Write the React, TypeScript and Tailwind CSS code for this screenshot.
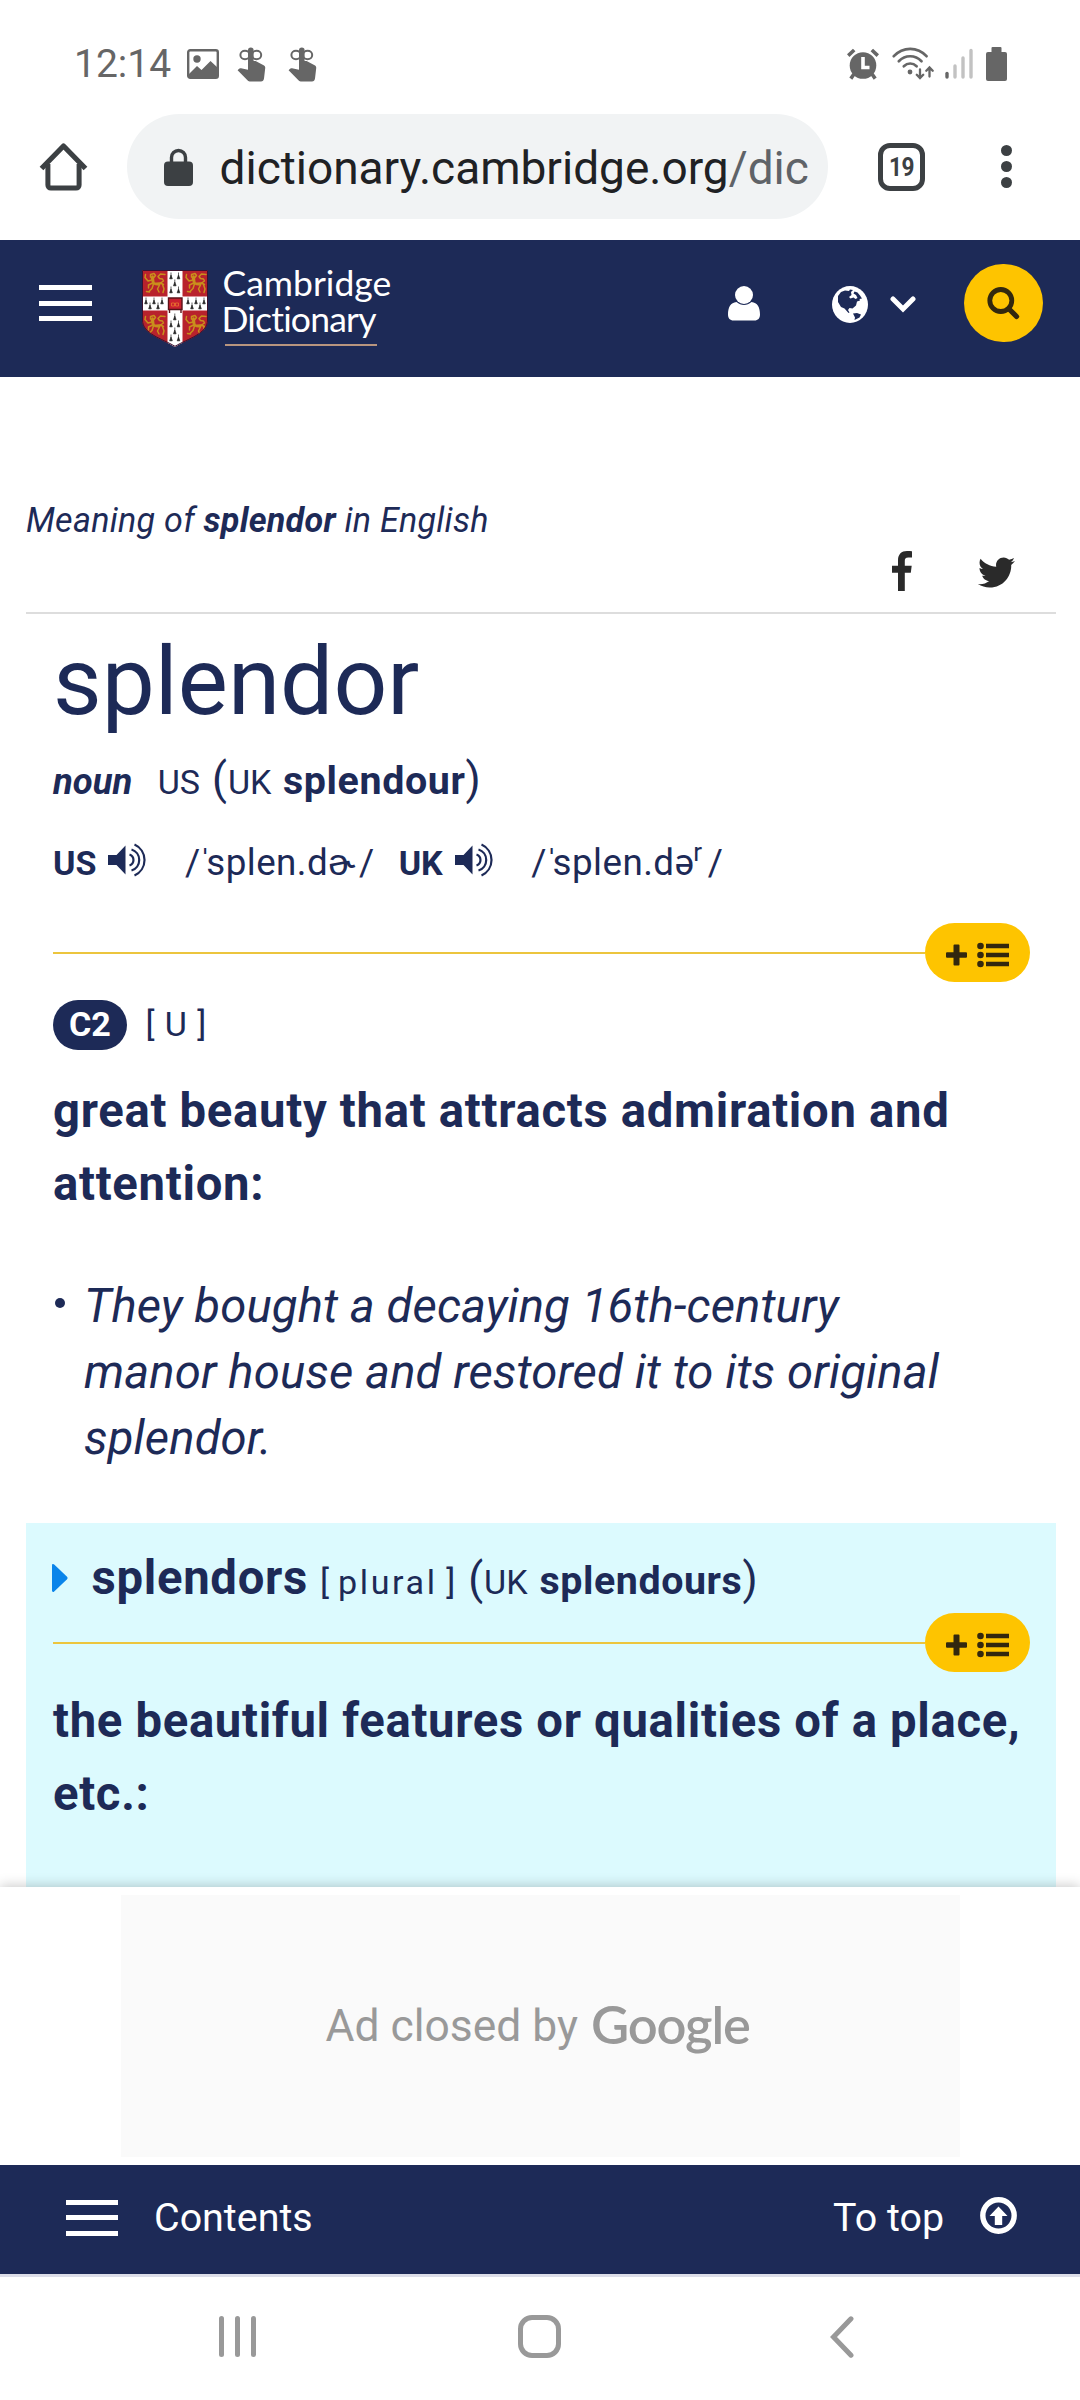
import React from 'react';
import { FaTwitter } from 'react-icons/fa';

const ReminderIcon = () => (
  <svg width="29" height="35" viewBox="0 0 29 35" fill="none">
    <ellipse cx="8" cy="8" rx="4.600" ry="4.200" stroke="#666" strokeWidth="2" />
    <ellipse cx="19.600" cy="8" rx="4.600" ry="4.200" stroke="#666" strokeWidth="2" />
    <path
      d="M11 3.200a2.800 2.800 0 0 1 5.600 0V14h2l8 4.200c1.300.7 1.800 1.600 1.600 3L27 31.500c-.3 2-1.300 3-3 3H13.500c-1.200 0-2-.3-2.800-1.100L.6 23.200l1.200-1.300c.6-.6 1.300-.8 2.200-.6l7 1.500z"
      fill="#666"
    />
  </svg>
);

const StatusBar = () => (
  <div className="flex h-24 items-center justify-between pt-[33px] pl-[74px] pr-[73px]">
    <div className="flex items-center">
      <span className="w-[97px] text-[39px] leading-none text-[#666]">12:14</span>
      <svg className="ml-4 -mt-0.5" width="32" height="30" viewBox="0 0 32 30">
        <rect x="1.200" y="1.200" width="29.600" height="27.600" rx="2" fill="none" stroke="#666" strokeWidth="2.400" />
        <circle cx="10" cy="10" r="3.700" fill="#666" />
        <path d="M2 25l8-8 4.500 4 9-9 7 6.500V28H2z" fill="#666" />
      </svg>
      <span className="ml-[18px] -mt-px"><ReminderIcon /></span>
      <span className="ml-[22px] -mt-px"><ReminderIcon /></span>
    </div>
    <div className="flex items-center pb-0.5">
      <svg width="32" height="32" viewBox="0 0 32 32">
        <path d="M7 26l-3.200 4.600M25 26l3.200 4.600M1.200 7.600l6-5.600M30.800 7.600l-6-5.600" stroke="#666" strokeWidth="3.600" />
        <circle cx="16" cy="17.500" r="13.300" fill="#666" />
        <path d="M16 9v10.500h6.500" stroke="#fff" strokeWidth="3.600" fill="none" />
      </svg>
      <svg className="ml-[13px]" width="42" height="33" viewBox="0 0 42 33" fill="none" stroke="#666" strokeLinecap="round">
        <path d="M1.800 9.200C11-.6 25.500-.6 34.500 9.200" strokeWidth="2.700" />
        <path d="M6.800 14.200c6.500-6.600 16.200-6.600 22.700 0M11.800 19.200c3.800-3.600 9-3.600 12.800 0" strokeWidth="2.700" />
        <circle cx="18" cy="25" r="2.400" fill="#666" stroke="none" />
        <path d="M28 22.500v8.500m-3.200-3.200l3.200 3.300 3.200-3.300M37.500 29.500V20.500m-3.200 3.200l3.200-3.300 3.200 3.300" strokeWidth="2.300" />
      </svg>
      <svg className="ml-[11px]" width="28" height="31" viewBox="0 0 28 31" strokeLinecap="round" strokeWidth="3.400">
        <path d="M2 25.500v3.500" stroke="#666" />
        <path d="M10 18v11M18 10v19M26 2.500V29" stroke="#c2c2c2" />
      </svg>
      <svg className="ml-[13px]" width="21" height="34" viewBox="0 0 21 34" fill="#666">
        <rect x="5.500" width="10" height="7" rx="1" />
        <rect y="5" width="21" height="29" rx="2" />
      </svg>
    </div>
  </div>
);

const BrowserBar = () => (
  <div className="mb-[3px] flex h-[141px] items-center">
    <svg className="ml-[39px]" width="49" height="49" viewBox="0 0 49 49" fill="none" stroke="#3c4043">
      <path d="M2.500 26.500L24.500 4l22 22.500" strokeWidth="5.200" strokeLinejoin="round" />
      <path d="M8.900 22v21c0 1.800 1.200 3 3 3h25.200c1.800 0 3-1.200 3-3V22" strokeWidth="5" />
    </svg>
    <div className="ml-[38.500px] flex h-[105px] w-[701.500px] items-center rounded-full bg-[#f1f3f4] pl-[37.500px]">
      <svg width="29" height="38" viewBox="0 0 29 38">
        <rect y="13.500" width="29" height="24.500" rx="4" fill="#3c4043" />
        <path d="M7.500 15V9.500a7 7 0 0 1 14 0V15" fill="none" stroke="#3c4043" strokeWidth="3.400" />
      </svg>
      <div className="ml-[26.500px] pt-[2px] text-[46px] leading-[60px] whitespace-nowrap text-[#202124]">
        dictionary.cambridge.org<span className="text-[#5f6368]">/dic</span>
      </div>
    </div>
    <div className="ml-[50px] flex h-[48px] w-[47px] items-center justify-center rounded-[12px] border-[5px] border-[#3c4043]">
      <span className="scale-x-[0.870] text-[26px] leading-none font-bold tracking-[-0.300px] text-[#3c4043]">19</span>
    </div>
    <div className="ml-[76px] flex flex-col gap-[5px]">
      <i className="size-[11px] rounded-full bg-[#3c4043]" />
      <i className="size-[11px] rounded-full bg-[#3c4043]" />
      <i className="size-[11px] rounded-full bg-[#3c4043]" />
    </div>
  </div>
);

const Lion = ({ x, y }: { x: number; y: number }) => (
  <g transform={`translate(${x} ${y})`} fill="none" stroke="#c98f1c" strokeWidth="1.500" strokeLinecap="round" strokeLinejoin="round">
    <path d="M7 3.500l3.500-1 1.500 2-2 2.500-3-1zM8 7l1 4 3 2 5-1 3 1.500" />
    <path d="M8.500 9L4.500 10 1.500 6.500M2 3.500l-.5 3M9 12l-4 2v3M10 13l-1.500 4.500-3 3M12 13.500l4 .5-2 4 1.500 3M19 13.500l1.500 4.500-1 3.500M17 12l3-2-1-2-3-.5-1.500-2 2.500-2.500 4.500.5M3 20.500l3 .5" />
    <path d="M9 5.500l1 7 6 .2" strokeWidth="2.600" />
  </g>
);

const ermine: [number, number][] = [
  [29, 6], [36.5, 6], [32.8, 13], [29, 20], [36.5, 20],
  [4, 31], [12, 31], [20, 31], [8, 36], [16, 36],
  [46, 31], [54, 31], [62, 31], [50, 36], [58, 36],
  [32.8, 47], [29, 54], [36.5, 54], [32.8, 61], [29, 68], [36.5, 68],
];

const Crest = () => (
  <svg width="66" height="77" viewBox="0 0 66 77">
    <clipPath id="shield"><path d="M0 0H66V50C66 64 46 69 33 77C20 69 0 64 0 50Z" /></clipPath>
    <g clipPath="url(#shield)">
      <rect width="66" height="77" fill="#b8222c" />
      <Lion x={1.5} y={1} />
      <Lion x={42.5} y={1} />
      <Lion x={1.5} y={43} />
      <Lion x={42.5} y={43} />
      <path d="M25.500 0h15v26.500H66v14H40.500V77h-15V40.500H0v-14h25.500z" fill="#fff" />
      {ermine.map(([x, y], i) => (
        <path key={i} d={`M${x} ${y - 3.5}v3M${x} ${y - 1}l-1.300 3.800h2.600z`} stroke="#222" strokeWidth=".7" fill="#222" />
      ))}
      <path d="M26.500 28h13.500v11.500H26.500zM27.500 39.500v3.500M39 39.500v3.500" fill="#c8202f" stroke="#5a1218" strokeWidth="1.400" />
      <path d="M29.500 33h3v3h-3zM33.500 33h3v3h-3z" fill="none" stroke="#e8772e" strokeWidth=".8" />
    </g>
    <path d="M.5.500H65.500V50C65.500 64 46 68.500 33 76.300C20 68.500.5 64 .5 50Z" fill="none" stroke="#3a1230" strokeWidth="1" />
  </svg>
);

const Burger = ({ className }: { className: string }) => (
  <div className={className}>
    <i className="h-[5px] bg-white" />
    <i className="h-[5px] bg-white" />
    <i className="h-[5px] bg-white" />
  </div>
);

const SiteHeader = () => (
  <header className="flex h-[137px] items-start bg-[#1d2a57]">
    <Burger className="mt-[45px] ml-[39px] flex w-[53px] flex-col gap-[10.500px]" />
    <div className="mt-[30px] ml-[50px]"><Crest /></div>
    <div className="ml-[13.500px] mt-[25px] w-[174px] font-['Lato'] text-[35.500px] leading-[35.500px] text-white">
      <div className="pl-[1px]">Cambridge</div>
      <div className="tracking-[-0.800px]">Dictionary</div>
      <div className="mt-[7.500px] ml-[3px] h-[2px] w-[152px] bg-[#b8957f]" />
    </div>
    <svg className="ml-[332px] mt-[46px]" width="32" height="35" viewBox="0 0 32 35" fill="#fff">
      <circle cx="16" cy="9" r="9" />
      <path d="M8.500 16C2.500 16.500 0 21.500 0 28.500c0 3.800 2 6 5.500 6h21c3.500 0 5.500-2.200 5.500-6 0-7-2.500-12-8.500-12.500-4.500 4-10.500 4-15 0z" />
    </svg>
    <svg className="ml-[72px] mt-[46px]" width="36" height="37" viewBox="0 0 36 37">
      <ellipse cx="18" cy="18.500" rx="18" ry="18.500" fill="#fff" />
      <path
        d="M6 10l3-4 4-1.500 4 .5 1-1.500 3 .5-2 2 .5 3-2.500 2 1.500 1.500 3-1 2 1.500 2-1-1.500-3-2.500-1.500 1-2 3 1 2.500 3 2 3-2.500.500.500 1.500-3 1-1 4-3.500 3-3-.5-1.500 2 1.500 2.500-1 .5-4-4.500-3.500-1.500-3-5zM21 27.500l4-.5 4 1.500-1.500 3-5 2.500.5-2.500z"
        fill="#1d2a57"
      />
    </svg>
    <svg className="ml-[22px] mt-[56px]" width="26" height="17" viewBox="0 0 26 17" fill="none">
      <path d="M3 3l10 10L23 3" stroke="#fff" strokeWidth="5" strokeLinecap="round" />
    </svg>
    <div className="ml-[48px] mt-[24px] flex h-[78px] w-[79px] items-center justify-center rounded-full bg-[#fec400]">
      <svg width="33" height="33" viewBox="0 0 33 33" fill="none" stroke="#33280e">
        <circle cx="13.800" cy="13.500" r="11" strokeWidth="4.800" />
        <path d="M22 22l7.500 7.500" strokeWidth="5.200" strokeLinecap="round" />
      </svg>
    </div>
  </header>
);

const Speaker = () => (
  <svg className="ml-3 inline-block align-[-2px]" width="39" height="34" viewBox="0 0 39 34" fill="none" stroke="#1d2a57" strokeWidth="2.200">
    <path d="M0 12h8.500L17.500 2.500v29L8.500 22H0z" fill="#1d2a57" stroke="none" />
    <path d="M21.500 11.500a5.800 5.800 0 0 1 0 11M23.500 6.500a11 11 0 0 1 0 21M26.500 1.500a17 17 0 0 1 0 31" />
  </svg>
);

const AddRule = () => (
  <div className="flex h-[59px] items-center pl-[27px] pr-[26px]">
    <i className="h-[2px] flex-1 bg-[#ecc53d]" />
    <div className="flex h-full w-[105px] items-center rounded-full bg-[#fec400] pl-[21px] pt-[5px]">
      <svg width="63" height="26" viewBox="0 0 63 26" fill="#33280e">
        <path d="M8.500 2.500h4a1 1 0 0 1 1 1v6.700h6.500a1 1 0 0 1 1 1v3.600a1 1 0 0 1-1 1h-6.500v6.700a1 1 0 0 1-1 1h-4a1 1 0 0 1-1-1v-6.700H1a1 1 0 0 1-1-1v-3.600a1 1 0 0 1 1-1h6.500V3.500a1 1 0 0 1 1-1z" />
        <circle cx="34.500" cy="4" r="3.300" />
        <circle cx="34.500" cy="13" r="3.300" />
        <circle cx="34.500" cy="22" r="3.300" />
        <path d="M40 1.800h23v4.400H40zM40 10.800h23v4.400H40zM40 19.800h23v4.400H40z" />
      </svg>
    </div>
  </div>
);

const Entry = () => (
  <main className="h-[1510px] overflow-hidden pr-[24px] pl-[26px] text-[34.100px] text-[#1d2a57]">
    <p className="mt-[119px] leading-[48px] tracking-[0.270px] italic">
      Meaning of <b>splendor</b> in English
    </p>
    <div className="flex h-[70px] items-start justify-end border-b-2 border-[#dddddd] pr-[41px] pt-[7px] text-[#2a2a2a]">
      <svg width="20" height="40" viewBox="0 0 20 40" fill="#2a2a2a">
        <path d="M20 .3v6.300h-3.700c-2.900 0-3.500 1.400-3.500 3.400v4.800h6.900l-.9 7h-6V40H6V21.800H0v-7h6V9.200C6 3.200 9.600 0 14.900 0c2.500 0 4.500.2 5.100.3z" />
      </svg>
      <FaTwitter className="ml-[66px] mt-[3px] size-[37px]" />
    </div>

    <h1 className="mt-[18px] pl-[27px] text-[94.500px] leading-[100px] font-normal">splendor</h1>
    <div className="mt-[20px] h-[60px] pl-[27px] leading-[60px] whitespace-nowrap">
      <b className="text-[36.400px] leading-none italic">noun</b>
      <span className="ml-[25.500px]">US</span>
      <span className="ml-[12px] text-[43.500px] leading-none">(</span>
      <span className="ml-[1px]">UK</span>
      <b className="ml-[11.500px] text-[39.400px] leading-none tracking-[0.600px]">splendour</b>
      <span className="text-[43.500px] leading-none">)</span>
    </div>
    <div className="mt-[21px] h-[60px] pl-[27px] leading-[60px] whitespace-nowrap">
      <b>US</b>
      <Speaker />
      <span className="ml-[37.500px] inline-block w-[174px] text-[36.750px] leading-none tracking-[0.450px]">/<span className="mr-[-5.500px] ml-[-1.500px]">ˈ</span>splen.dɚ</span>
      <span className="text-[36.750px] leading-none">/</span>
      <b className="ml-[24.500px]">UK</b>
      <Speaker />
      <span className="ml-[37.500px] inline-block w-[162px] text-[36.750px] leading-none tracking-[0.450px]">/<span className="mr-[-5.500px] ml-[-1.500px]">ˈ</span>splen.də</span>
      <span className="inline-block w-[14.500px] align-[14px] text-[26px] leading-none">r</span>
      <span className="text-[36.750px] leading-none">/</span>
    </div>

    <div className="mt-[30px]"><AddRule /></div>

    <div className="mt-[18px] flex h-[50px] pl-[27px] leading-[48px]">
      <b className="w-[74px] rounded-full bg-[#1d2a57] text-center leading-[49px] text-white">C2</b>
      <span className="ml-[18.500px] tracking-[0.900px]">[ U ]</span>
    </div>
    <p className="mt-[24.500px] pl-[27px] text-[47.250px] leading-[73px] font-bold tracking-[0.700px]">
      great beauty that attracts admiration and<br />attention:
    </p>
    <div className="mt-[52.500px] flex pl-[29px]">
      <i className="mt-[25px] size-[9.500px] rounded-full bg-[#1d2a57]" />
      <p className="ml-[19.500px] text-[47.250px] leading-[66px] tracking-[0.100px] italic">
        They bought a decaying 16th-century<br />manor house and restored it to its original<br />splendor.
      </p>
    </div>

    <section className="mt-[52px] h-[400px] bg-[#dcfafe] pt-[29px]">
      <div className="h-[61px] pl-[26px] leading-[60px] whitespace-nowrap">
        <svg className="inline-block align-[2px]" width="16" height="28" viewBox="0 0 16 28" fill="#0a84ea">
          <path d="M0 1.500C0 0 1.200-.3 2.200.6L14.800 12.500c1 1 1 2 0 3L2.200 27.400C1.200 28.300 0 28 0 26.500z" />
        </svg>
        <b className="ml-[23.500px] text-[47.250px] leading-none tracking-[0.700px]">splendors</b>
        <span className="ml-[12px]">[ </span>
        <span className="ml-[0.500px] tracking-[2.625px]">plural</span>
        <span> ]</span>
        <span className="ml-[13px] text-[43.500px] leading-none">(</span>
        <span className="ml-[1px]">UK</span>
        <b className="ml-[12px] text-[39.400px] leading-none tracking-[0.550px]">splendours</b>
        <span className="text-[43.500px] leading-none">)</span>
      </div>
      <AddRule />
      <p className="mt-[12.500px] pl-[27px] text-[47.250px] leading-[73px] font-bold tracking-[0.680px] whitespace-nowrap">
        the beautiful features or qualities of a place,<br />etc.:
      </p>
    </section>
  </main>
);

const AdBanner = () => (
  <div className="relative flex h-[278px] justify-center bg-white py-2 shadow-[0_-1px_12px_rgba(0,0,0,0.220)]">
    <div className="flex h-[262px] w-[839px] items-center bg-[#fafafa] pl-[205px] text-[44.400px] text-[#999]">
      <span>Ad closed by</span>
      <span className="-mt-[4px] ml-[13px] font-['Lato'] text-[52.500px] leading-none font-semibold tracking-[-1.200px]">Google</span>
    </div>
  </div>
);

const ContentsBar = () => (
  <div className="relative flex h-[112px] items-center border-b-[3px] border-[#dcdde8] bg-[#1d2a57] pb-[4px] text-[39.400px] text-white">
    <Burger className="ml-[66px] flex w-[52px] flex-col gap-[10.500px]" />
    <span className="ml-[36px]">Contents</span>
    <span className="ml-auto">To top</span>
    <svg className="ml-[36px] mr-[63px] -mt-1" width="37" height="37" viewBox="0 0 37 37">
      <circle cx="18.500" cy="18.500" r="15.700" fill="none" stroke="#fff" strokeWidth="5.400" />
      <path d="M18.500 9.500l9 9.500h-5.300v9h-7.400v-9H9.500z" fill="#fff" />
    </svg>
  </div>
);

const SystemNav = () => (
  <div className="flex h-[123px] items-center bg-white pl-[219px] pb-[4px]">
    <div className="flex gap-[10.500px]">
      <i className="h-[41px] w-[5.300px] rounded-full bg-[#999]" />
      <i className="h-[41px] w-[5.300px] rounded-full bg-[#999]" />
      <i className="h-[41px] w-[5.300px] rounded-full bg-[#999]" />
    </div>
    <div className="ml-[262.500px] h-[43px] w-[43px] rounded-[14px] border-[5px] border-[#999]" />
    <svg className="ml-[269px]" width="24" height="42" viewBox="0 0 24 42" fill="none" stroke="#999" strokeWidth="5">
      <path d="M21 2.800L3.500 21 21 39.200" strokeLinecap="round" />
    </svg>
  </div>
);

export default function App() {
  return (
    <div className="h-[2400px] w-[1080px] overflow-hidden bg-white font-['Roboto',sans-serif]">
      <StatusBar />
      <BrowserBar />
      <SiteHeader />
      <Entry />
      <AdBanner />
      <ContentsBar />
      <SystemNav />
    </div>
  );
}
